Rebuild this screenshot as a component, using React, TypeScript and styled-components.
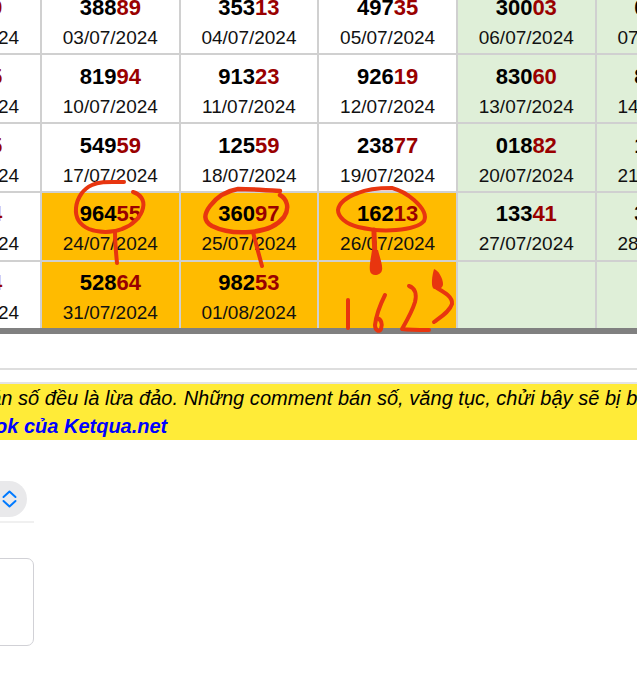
import React from "react";
import styled, { createGlobalStyle } from "styled-components";

const GlobalStyle = createGlobalStyle`
  html, body {
    margin: 0;
    padding: 0;
    background: #fff;
    overflow: hidden;
  }
  body {
    font-family: "Liberation Sans", Arial, sans-serif;
    color: #000;
  }
`;

const Page = styled.div`
  position: relative;
  width: 637px;
  height: 700px;
  overflow: hidden;
`;

const TableClip = styled.div`
  height: 334px;
  overflow: hidden;
`;

const Board = styled.div`
  display: grid;
  grid-template-columns: repeat(6, 136.67px);
  grid-auto-rows: 66.8px;
  gap: 2px;
  width: max-content;
  margin: -13.6px 0 0 -96.7px;
  background: #d0d0d0;
  border-bottom: 6px solid #808080;
`;

const Cell = styled.div<{ $tone: "plain" | "hit" | "weekend" }>`
  box-sizing: border-box;
  padding-top: 8.6px;
  text-align: center;
  background: ${(p) =>
    p.$tone === "hit" ? "#ffbb00" : p.$tone === "weekend" ? "#dfefd8" : "#fff"};
`;

const Number = styled.div`
  font-size: 22px;
  line-height: 26px;
  font-weight: 700;
  color: #000;
  span {
    color: #990000;
  }
`;

const DateText = styled.div`
  font-size: 19px;
  line-height: 33px;
  color: #111;
`;

const Divider = styled.div`
  height: 2px;
  margin-top: 34px;
  background: #dedede;
`;

const Notice = styled.div`
  margin-top: 12px;
  border-top: 2px solid #e4e4e4;
  height: 56px;
  background: #ffeb38;
  overflow: hidden;
  font-size: 20px;
  line-height: 28px;
  font-style: italic;
  white-space: nowrap;
`;

const NoticeLine = styled.div`
  margin-left: -21px;
  letter-spacing: 0.03px;
`;

const NoticeLink = styled.div`
  margin-left: -75px;
  font-weight: 700;
  color: #0000ff;
`;

const SelectRow = styled.div`
  width: 34px;
  height: 40px;
  margin-top: 41px;
  border-bottom: 2px solid #f0f0f0;
`;

const SelectPill = styled.div`
  display: flex;
  align-items: center;
  justify-content: flex-end;
  width: 27px;
  height: 36px;
  border-radius: 0 18px 18px 0;
  background: #e9e9eb;
  svg {
    margin-right: 10px;
  }
`;

const TextBox = styled.div`
  box-sizing: border-box;
  width: 54px;
  height: 88px;
  margin: 35px 0 0 -20px;
  border: 1px solid #d1d1d6;
  border-radius: 7px;
`;

const Scribbles = styled.svg`
  position: absolute;
  top: 0;
  left: 0;
  pointer-events: none;
`;

type Day = { num?: string; date?: string; tone: "plain" | "hit" | "weekend" };

const rows: Day[][] = [
  [
    { num: "27419", date: "02/07/2024", tone: "plain" },
    { num: "38889", date: "03/07/2024", tone: "plain" },
    { num: "35313", date: "04/07/2024", tone: "plain" },
    { num: "49735", date: "05/07/2024", tone: "plain" },
    { num: "30003", date: "06/07/2024", tone: "weekend" },
    { num: "06128", date: "07/07/2024", tone: "weekend" },
  ],
  [
    { num: "40235", date: "09/07/2024", tone: "plain" },
    { num: "81994", date: "10/07/2024", tone: "plain" },
    { num: "91323", date: "11/07/2024", tone: "plain" },
    { num: "92619", date: "12/07/2024", tone: "plain" },
    { num: "83060", date: "13/07/2024", tone: "weekend" },
    { num: "87142", date: "14/07/2024", tone: "weekend" },
  ],
  [
    { num: "61745", date: "16/07/2024", tone: "plain" },
    { num: "54959", date: "17/07/2024", tone: "plain" },
    { num: "12559", date: "18/07/2024", tone: "plain" },
    { num: "23877", date: "19/07/2024", tone: "plain" },
    { num: "01882", date: "20/07/2024", tone: "weekend" },
    { num: "10536", date: "21/07/2024", tone: "weekend" },
  ],
  [
    { num: "72604", date: "23/07/2024", tone: "plain" },
    { num: "96455", date: "24/07/2024", tone: "hit" },
    { num: "36097", date: "25/07/2024", tone: "hit" },
    { num: "16213", date: "26/07/2024", tone: "hit" },
    { num: "13341", date: "27/07/2024", tone: "weekend" },
    { num: "35870", date: "28/07/2024", tone: "weekend" },
  ],
  [
    { num: "20974", date: "30/07/2024", tone: "plain" },
    { num: "52864", date: "31/07/2024", tone: "hit" },
    { num: "98253", date: "01/08/2024", tone: "hit" },
    { tone: "hit" },
    { tone: "weekend" },
    { tone: "weekend" },
  ],
];

const ink = "#e8350f";

function Marks() {
  return (
    <Scribbles width="637" height="700" viewBox="0 0 637 700" fill="none">
      <g stroke={ink} strokeWidth="4" strokeLinecap="round" strokeLinejoin="round">
        {/* first circle */}
        <path d="M124 182 C110 182 100 181 92 185 C83 189 77 198 76 208 C75 219 80 225 89 229 C99 233 112 233 122 229 C133 225 141 217 143 208 C145 200 140 194 133 192" />
        <path d="M115 232 C115 243 116 253 117 263" />
        {/* second circle */}
        <path strokeWidth="4.5" d="M280 191 C265 190 250 189 238 189 C226 191 216 198 210 206 C204 214 203 221 212 226 C224 232 238 233 250 232 C264 231 277 226 284 217 C290 208 287 199 280 195" />
        <path d="M253 232 C256 244 259 255 262 266" />
        {/* third circle */}
        <path d="M392 188 C378 188 367 189 358 193 C347 197 339 203 338 210 C338 217 346 224 358 227 C370 230 384 231 396 230 C408 229 420 226 424 221 C427 215 423 208 414 200 C407 194 400 190 392 188 Z" />
        <path strokeWidth="5" d="M374 230 C374 240 375 250 375 262" />
        {/* 1623 written in the empty cell */}
        <path d="M348 300 L348 328" />
        <path d="M385 295 C380 305 376 317 375 325 C375 330 379 333 381 329 C383 324 381 319 377 318" />
        <path d="M409 286 C415 288 417 294 415 302 C412 312 406 322 402 329 C410 330 420 330 429 330" />
        <path d="M434 322 C442 316 450 311 452 304 C453 297 444 292 437 288" />
      </g>
      <g fill={ink}>
        <path d="M372 250 L378 250 C380 258 383 266 382 270 C381 276 371 277 370 271 C369 266 371 258 372 250 Z" />
        <path d="M434 269 C438 270 443 278 443 284 C443 289 436 291 433 288 C431 285 432 276 434 269 Z" />
      </g>
    </Scribbles>
  );
}

export default function App() {
  return (
    <Page>
      <GlobalStyle />
      <TableClip>
        <Board>
          {rows.flat().map((day, i) => (
            <Cell key={i} $tone={day.tone}>
              {day.num && (
                <Number>
                  {day.num.slice(0, 3)}
                  <span>{day.num.slice(3)}</span>
                </Number>
              )}
              {day.date && <DateText>{day.date}</DateText>}
            </Cell>
          ))}
        </Board>
      </TableClip>
      <Divider />
      <Notice>
        <NoticeLine>
          bán số đều là lừa đảo. Những comment bán số, văng tục, chửi bậy sẽ bị ban
        </NoticeLine>
        <NoticeLink>Facebook của Ketqua.net</NoticeLink>
      </Notice>
      <SelectRow>
        <SelectPill>
          <svg width="15" height="18" viewBox="0 0 15 18" fill="none">
            <path
              d="M1.5 7 L7.5 1.5 L13.5 7 M1.5 11 L7.5 16.5 L13.5 11"
              stroke="#007aff"
              strokeWidth="2"
              strokeLinecap="round"
              strokeLinejoin="round"
            />
          </svg>
        </SelectPill>
      </SelectRow>
      <TextBox />
      <Marks />
    </Page>
  );
}
